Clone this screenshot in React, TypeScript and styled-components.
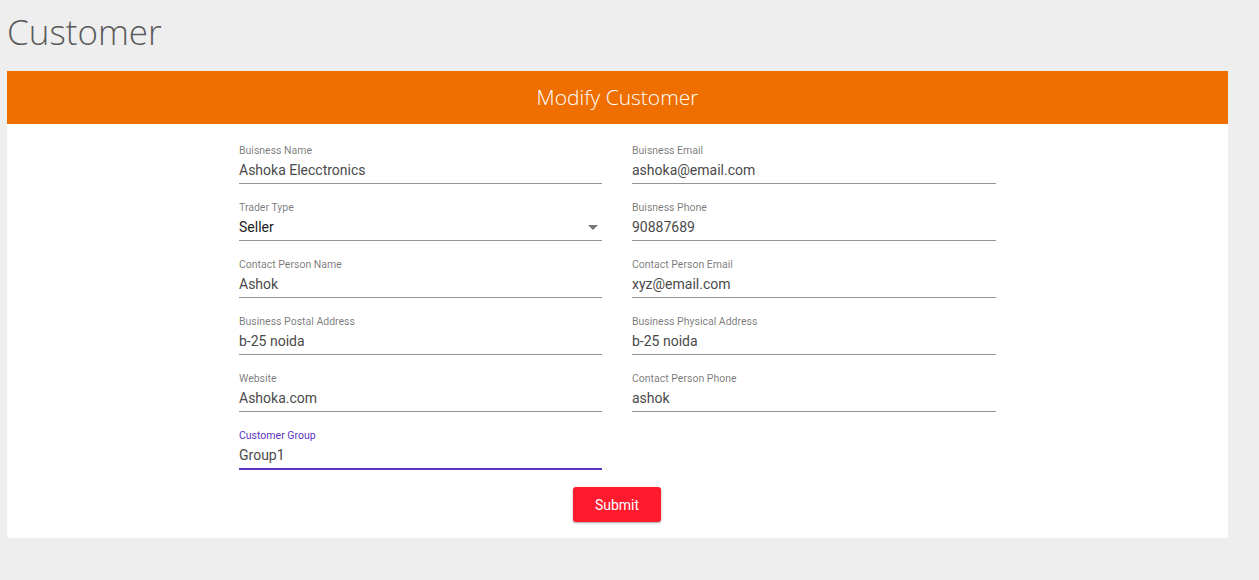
import React from "react";
import styled, { createGlobalStyle } from "styled-components";

const GlobalStyle = createGlobalStyle`
  html, body {
    margin: 0;
    padding: 0;
    background: #eeeeee;
  }
  * { box-sizing: border-box; }
`;

const Page = styled.div`
  min-height: 580px;
  background: #eeeeee;
  padding: 7px 31px 0 7px;
`;

const PageTitle = styled.h1`
  margin: 0 0 15px 0;
  font-family: "Open Sans", sans-serif;
  font-weight: 300;
  font-size: 35px;
  line-height: 49px;
  color: #5a5a5a;
`;

const Card = styled.section`
  background: #ffffff;
  border-radius: 2px;
`;

const CardHeader = styled.header`
  height: 53px;
  background: #ee6e00;
  display: flex;
  align-items: center;
  justify-content: center;
  padding-bottom: 1px;
  font-family: "Open Sans", sans-serif;
  font-weight: 300;
  font-size: 21px;
  color: #ffffff;
`;

const CardBody = styled.form`
  padding: 20px 0 16px;
  display: flex;
  flex-direction: column;
  align-items: center;
`;

const FieldGrid = styled.div`
  display: grid;
  grid-template-columns: 363px 364px;
  column-gap: 30px;
  row-gap: 17px;
`;

const Field = styled.label`
  display: flex;
  flex-direction: column;
  font-family: Roboto, "Liberation Sans", sans-serif;
`;

const Label = styled.span<{ $focused?: boolean }>`
  height: 14px;
  font-size: 10.5px;
  line-height: 12px;
  padding-top: 1px;
  color: ${(p) => (p.$focused ? "#5b35c2" : "rgba(0,0,0,0.54)")};
`;

const InputWrap = styled.div<{ $focused?: boolean }>`
  position: relative;
  display: flex;
  align-items: center;
  border-bottom: 1px solid rgba(0, 0, 0, 0.42);
  &::after {
    content: "";
    position: absolute;
    left: 0;
    right: 0;
    bottom: -2px;
    height: 2px;
    background: #5b35c2;
    display: ${(p) => (p.$focused ? "block" : "none")};
  }
`;

const Value = styled.span<{ $dark?: boolean }>`
  flex: 1;
  font-size: 14px;
  line-height: 19px;
  padding: 3px 0 3px;
  color: ${(p) => (p.$dark ? "#222222" : "#4a4a4a")};
`;

const Arrow = styled.svg`
  width: 10px;
  height: 5px;
  margin-right: 4px;
  margin-bottom: 1px;
`;

const SubmitButton = styled.button`
  margin-top: 18px;
  margin-right: 1px;
  width: 88px;
  height: 35px;
  border: none;
  border-radius: 3px;
  background: #ff1a2d;
  color: #ffffff;
  font-family: Roboto, "Liberation Sans", sans-serif;
  font-size: 14px;
  box-shadow: 0 1px 3px rgba(0, 0, 0, 0.25), 0 1px 1px rgba(0, 0, 0, 0.14);
  cursor: pointer;
`;

type FieldDef = {
  label: string;
  value: string;
  select?: boolean;
  focused?: boolean;
};

const fields: FieldDef[] = [
  { label: "Buisness Name", value: "Ashoka Elecctronics" },
  { label: "Buisness Email", value: "ashoka@email.com" },
  { label: "Trader Type", value: "Seller", select: true },
  { label: "Buisness Phone", value: "90887689" },
  { label: "Contact Person Name", value: "Ashok" },
  { label: "Contact Person Email", value: "xyz@email.com" },
  { label: "Business Postal Address", value: "b-25 noida" },
  { label: "Business Physical Address", value: "b-25 noida" },
  { label: "Website", value: "Ashoka.com" },
  { label: "Contact Person Phone", value: "ashok" },
  { label: "Customer Group", value: "Group1", focused: true },
];

export default function App() {
  return (
    <>
      <GlobalStyle />
      <Page>
        <PageTitle>Customer</PageTitle>
        <Card>
          <CardHeader>Modify Customer</CardHeader>
          <CardBody onSubmit={(e) => e.preventDefault()}>
            <FieldGrid>
              {fields.map((f) => (
                <Field key={f.label}>
                  <Label $focused={f.focused}>{f.label}</Label>
                  <InputWrap $focused={f.focused}>
                    <Value $dark={f.select}>{f.value}</Value>
                    {f.select && (
                      <Arrow viewBox="0 0 10 5">
                        <path d="M0 0 L10 0 L5 5 Z" fill="rgba(0,0,0,0.54)" />
                      </Arrow>
                    )}
                  </InputWrap>
                </Field>
              ))}
            </FieldGrid>
            <SubmitButton type="submit">Submit</SubmitButton>
          </CardBody>
        </Card>
      </Page>
    </>
  );
}
